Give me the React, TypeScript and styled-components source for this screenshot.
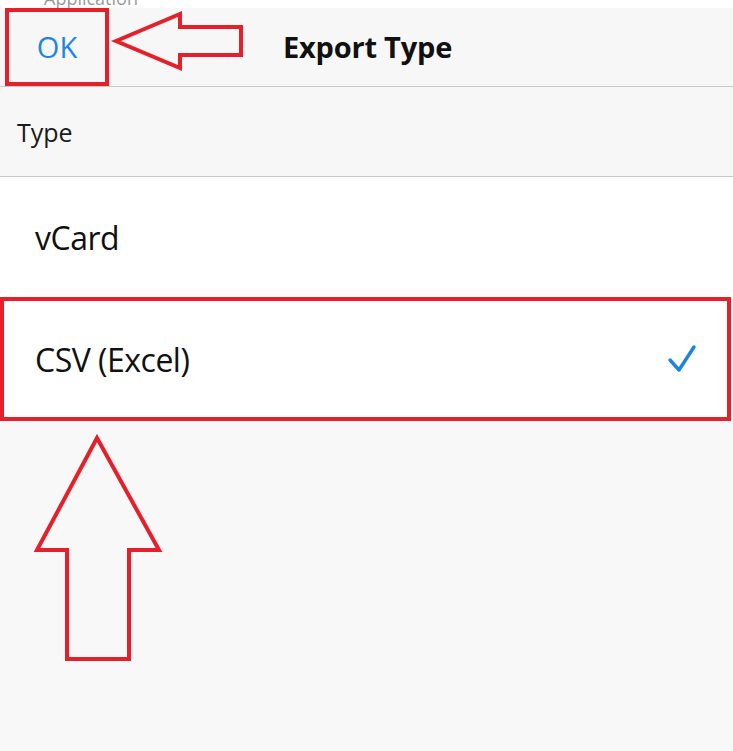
import React from "react";
import styled, { createGlobalStyle } from "styled-components";

const GlobalStyle = createGlobalStyle`
  html, body {
    margin: 0;
    padding: 0;
    background: #f8f8f8;
  }
  body {
    font-family: "Open Sans", "Noto Sans", sans-serif;
    -webkit-font-smoothing: antialiased;
  }
`;

const ANNOTATION_RED = "#e5202b";

type Option = { id: string; label: string };

const options: Option[] = [
  { id: "vcard", label: "vCard" },
  { id: "csv", label: "CSV (Excel)" },
];

const selectedId = "csv";

export default function App() {
  return (
    <>
      <GlobalStyle />
      <Screen>
        <StatusStrip>
          <StatusText>Application</StatusText>
        </StatusStrip>

        <NavBar>
          <OkButton $highlighted>OK</OkButton>
          <Title>Export Type</Title>
          <span />
        </NavBar>

        <SectionHeader>Type</SectionHeader>

        <List>
          {options.map((option) => (
            <Row key={option.id} $highlighted={option.id === selectedId}>
              <RowLabel>{option.label}</RowLabel>
              {option.id === selectedId && <Check />}
            </Row>
          ))}
        </List>

        <LeftArrow />
        <UpArrow />
      </Screen>
    </>
  );
}

const Check = () => (
  <CheckIcon width="30" height="30" viewBox="0 0 30 30">
    <path
      d="M3 16 L12 26 L27 3"
      fill="none"
      stroke="#1a84e4"
      strokeWidth="3.4"
      strokeLinecap="round"
      strokeLinejoin="round"
    />
  </CheckIcon>
);

const LeftArrow = () => (
  <ArrowSvg $left={112} $top={10} width="134" height="62" viewBox="112 10 134 62">
    <polygon
      points="116,41 180,14 180,27 241,27 241,55 180,55 180,68"
      fill="none"
      stroke={ANNOTATION_RED}
      strokeWidth="4"
      strokeLinejoin="miter"
    />
  </ArrowSvg>
);

const UpArrow = () => (
  <ArrowSvg $left={32} $top={432} width="132" height="232" viewBox="32 432 132 232">
    <polygon
      points="97,438 159,550 129,550 129,659 67,659 67,550 37,550"
      fill="none"
      stroke={ANNOTATION_RED}
      strokeWidth="4"
      strokeLinejoin="miter"
    />
  </ArrowSvg>
);

const Screen = styled.div`
  position: relative;
  width: 733px;
  height: 751px;
  overflow: hidden;
  background: #f8f8f8;
`;

const StatusStrip = styled.div`
  height: 8px;
  overflow: hidden;
  background: #ffffff;
`;

const StatusText = styled.div`
  margin: -12px 0 0 44px;
  font-size: 18px;
  line-height: 20px;
  color: #9a9a9a;
`;

const NavBar = styled.div`
  display: grid;
  grid-template-columns: 1fr auto 1fr;
  align-items: center;
  height: 78px;
  background: #f7f7f7;
  border-bottom: 1px solid #c9c9cb;
`;

const OkButton = styled.div<{ $highlighted?: boolean }>`
  justify-self: start;
  box-sizing: border-box;
  display: flex;
  align-items: center;
  justify-content: center;
  width: 104px;
  height: 78px;
  margin-left: 5px;
  padding-bottom: 2px;
  font-size: 29px;
  color: #1d86e3;
  border: ${(p) => (p.$highlighted ? `4px solid ${ANNOTATION_RED}` : "none")};
`;

const Title = styled.div`
  font-size: 29px;
  font-weight: 700;
  color: #111111;
  letter-spacing: -0.2px;
  padding: 0 0 2px 2px;
`;

const SectionHeader = styled.div`
  display: flex;
  align-items: center;
  height: 89px;
  padding-left: 17px;
  font-size: 25px;
  color: #1a1a1a;
  background: #f7f7f7;
  border-bottom: 1px solid #c9c9cb;
`;

const List = styled.div`
  display: flex;
  flex-direction: column;
  background: #ffffff;
`;

const Row = styled.div<{ $highlighted?: boolean }>`
  box-sizing: border-box;
  display: flex;
  align-items: center;
  justify-content: space-between;
  height: ${(p) => (p.$highlighted ? "124px" : "120px")};
  padding: 0 30px 0 ${(p) => (p.$highlighted ? "31px" : "35px")};
  background: #ffffff;
  border: ${(p) => (p.$highlighted ? `4px solid ${ANNOTATION_RED}` : "none")};
  margin-right: ${(p) => (p.$highlighted ? "2px" : "0")};
`;

const RowLabel = styled.span`
  font-size: 32px;
  color: #111111;
  letter-spacing: -0.5px;
`;

const CheckIcon = styled.svg`
  display: block;
`;

const ArrowSvg = styled.svg<{ $left: number; $top: number }>`
  position: absolute;
  left: ${(p) => p.$left}px;
  top: ${(p) => p.$top}px;
  overflow: visible;
`;
